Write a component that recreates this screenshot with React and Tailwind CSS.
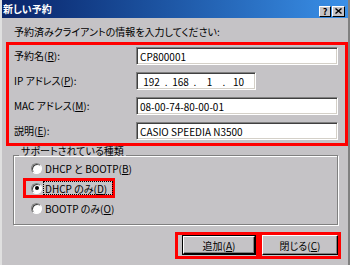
import React from 'react';

const K = ({ c }) => <span className="underline">{c}</span>;

const Field = ({ w = 'w-[202px]', children }) => (
  <div
    className={`${w} h-[18px] bg-white border border-t-[#808080] border-l-[#808080] border-b-white border-r-white shadow-[inset_1px_1px_0_#404040,inset_-1px_-1px_0_#d4d0c8] flex items-center px-[3px] text-[10px] text-black`}
  >
    {children}
  </div>
);

const Radio = ({ on }) => (
  <span className="w-[11px] h-[11px] rounded-full bg-white border border-t-[#808080] border-l-[#808080] border-b-white border-r-white shadow-[inset_1px_1px_0_#404040] flex items-center justify-center shrink-0">
    {on && <span className="w-[4px] h-[4px] rounded-full bg-black" />}
  </span>
);

const Btn = ({ def, children }) => (
  <div className={`h-[20px] w-full ${def ? 'border border-black' : ''}`}>
    <div className="h-full w-full bg-[#c5c3c6] border border-t-white border-l-white border-b-black border-r-black shadow-[inset_-1px_-1px_0_#808080] flex items-center justify-center text-[10px] text-black">
      {children}
    </div>
  </div>
);

export default function App() {
  const rows = [
    { label: <>予約名(<K c="R" />):</>, value: 'CP800001' },
    { label: <>IP アドレス(<K c="P" />):</>, ip: ['192', '168', '1', '10'] },
    { label: <>MAC アドレス(<K c="M" />):</>, value: '08-00-74-80-00-01' },
    { label: <>説明(<K c="E" />):</>, value: 'CASIO SPEEDIA N3500' },
  ];

  const radios = [
    { text: <>DHCP と BOOTP(<K c="B" />)</> },
    { text: <>DHCP のみ(<K c="D" />)</>, on: true },
    { text: <>BOOTP のみ(<K c="O" />)</> },
  ];

  return (
    <div className="w-[350px] h-[265px] overflow-hidden bg-[#c5c3c6] border-l-2 border-l-[#e0e0e0] border-r-2 border-r-[#808080] flex flex-col font-['Noto_Sans_CJK_JP',sans-serif] [font-feature-settings:'palt'] text-black">
      {/* title bar */}
      <div className="h-[18px] shrink-0 bg-gradient-to-r from-[#0a246a] to-[#3a90e8] flex items-center pl-[1px] pr-[3px]">
        <span className="text-white text-[10px] font-bold leading-none flex-1">新しい予約</span>
        <div className="flex gap-[1px] mt-[4px]">
          <div className="w-[12px] h-[11px] bg-[#c5c3c6] border border-t-white border-l-white border-b-black border-r-black flex items-center justify-center text-[9px] font-bold leading-none">?</div>
          <div className="w-[13px] h-[11px] bg-[#c5c3c6] border border-t-white border-l-white border-b-black border-r-black flex items-center justify-center">
            <svg width="7" height="6" viewBox="0 0 7 6">
              <path d="M0.5 0.5 L6.5 5.5 M6.5 0.5 L0.5 5.5" stroke="black" strokeWidth="1.4" />
            </svg>
          </div>
        </div>
      </div>

      {/* instruction */}
      <div className="mt-[8px] pl-[12px] text-[10px] leading-[12px]">予約済みクライアントの情報を入力してください:</div>

      {/* fields */}
      <div className="mt-[4px] ml-[4px] w-[342px] h-[104px] border-[3px] border-[#ff0000] pl-[5px] pt-[2px] flex flex-col gap-[7px]">
        {rows.map((r, i) => (
          <div key={i} className="flex items-center h-[18px]">
            <div className="w-[122px] text-[10px] leading-[12px]">{r.label}</div>
            {r.ip ? (
              <Field w="w-[120px]">
                <div className="flex w-full -mx-[1px]">
                  {r.ip.map((o, j) => (
                    <React.Fragment key={j}>
                      {j > 0 && <span className="w-[4px] text-center">.</span>}
                      <span className="w-[26px] text-center">{o}</span>
                    </React.Fragment>
                  ))}
                </div>
              </Field>
            ) : (
              <Field>{r.value}</Field>
            )}
          </div>
        ))}
      </div>

      {/* group */}
      <div className="relative mt-[9px] ml-[11px] w-[325px] h-[70px] border border-[#808080] shadow-[inset_1px_1px_0_#fff,1px_1px_0_#fff] pt-[2px]">
        <span className="absolute -top-[10px] left-[5px] px-[2px] bg-[#c5c3c6] text-[10px] leading-[10px]">サポートされている種類</span>
        {radios.map((r, i) => (
          <div
            key={i}
            className={`ml-[9px] w-[92px] h-[20px] border-[3px] ${r.on ? 'border-[#ff0000]' : 'border-transparent'} flex items-center pl-[5px]`}
          >
            <Radio on={r.on} />
            <span
              className={`ml-[1px] pl-[2px] pr-[6px] h-[14px] flex items-center text-[10px] whitespace-nowrap ${r.on ? 'outline outline-1 outline-dotted outline-black -outline-offset-1' : ''}`}
            >
              {r.text}
            </span>
          </div>
        ))}
      </div>

      {/* buttons */}
      <div className="mt-[7px] flex justify-end pr-[7px]">
        <div className="w-[84px] h-[27px] border-[3px] border-[#ff0000] pl-[4px]">
          <Btn def>追加(<K c="A" />)</Btn>
        </div>
        <div className="w-[82px] h-[27px] border-[3px] border-[#ff0000]">
          <Btn>閉じる(<K c="C" />)</Btn>
        </div>
      </div>
    </div>
  );
}
